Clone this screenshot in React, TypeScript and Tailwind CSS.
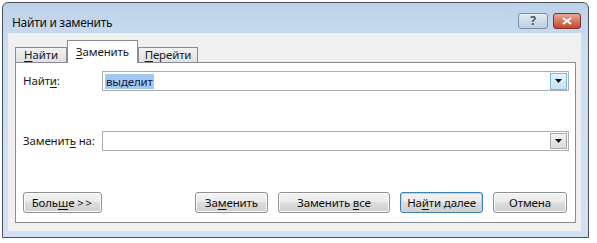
import React from 'react';

function U({ children }: { children: React.ReactNode }) {
  return <span className="underline underline-offset-2 decoration-1">{children}</span>;
}

function Arrow() {
  return (
    <svg width="7" height="4" viewBox="0 0 7 4">
      <path d="M0 0h7L3.5 4z" fill="#111" />
    </svg>
  );
}

function Combo({ focused, children }: { focused?: boolean; children?: React.ReactNode }) {
  return (
    <div className="flex-1 h-[20px] border border-[#abadb3] bg-white flex items-center pl-[2px] pr-px">
      <div className="flex-1 flex items-center">{children}</div>
      <div
        className={
          focused
            ? 'w-[17px] h-[17px] border border-[#7eb4dd] bg-gradient-to-b from-[#e6f3fc] to-[#c5e2f6] flex items-center justify-center'
            : 'w-[17px] h-[16px] border border-[#a9a9a9] bg-gradient-to-b from-[#f4f4f4] to-[#d9d9d9] flex items-center justify-center'
        }
      >
        <Arrow />
      </div>
    </div>
  );
}

function Btn({ w, focused, children }: { w: string; focused?: boolean; children: React.ReactNode }) {
  return (
    <div
      className={
        (focused
          ? 'border-[#3c7fb1] shadow-[inset_0_0_0_1px_#aedcf6] '
          : 'border-[#8e8f8f] shadow-[inset_0_0_0_1px_#fcfcfc] ') +
        w +
        ' h-[21px] rounded-[3px] border bg-[linear-gradient(#f3f3f3_0%,#ebebeb_45%,#dddddd_50%,#cfcfcf_100%)] flex items-center justify-center text-[#111]'
      }
    >
      {children}
    </div>
  );
}

export default function App() {
  return (
    <div className="w-[597px] h-[243px] bg-white pt-[2px] pl-[2px] font-['Noto_Sans',sans-serif] text-[11.5px] tracking-[-0.15px] leading-[16px] text-[#1a1a1a]">
      <div className="w-[587px] h-[236px] border border-[#4b4f55] rounded-t-[6px] bg-[linear-gradient(#bcd2ea,#cddef0_20%,#d2e2f2)] flex flex-col pl-[5px] pr-[7px] pb-[6px]">
        {/* Title bar */}
        <div className="h-[30px] flex items-start shrink-0">
          <div className="mt-[12px] ml-[4px] text-[#111] text-[12px] tracking-[-0.3px]">Найти и заменить</div>
          <div className="ml-auto mt-[10px] flex gap-[5px]">
            <div className="w-[30px] h-[16px] rounded-[3px] border border-[#7d8ea2] bg-[linear-gradient(#e6edf5,#cfdcea_50%,#bccde0)] flex items-center justify-center text-[#4a5566] text-[12px] leading-none font-bold">
              ?
            </div>
            <div className="w-[28px] h-[16px] rounded-[3px] border border-[#7b3326] bg-[linear-gradient(#e8a898,#d8775f_50%,#c2462f)] flex items-center justify-center">
              <svg width="10" height="8" viewBox="0 0 10 8">
                <path d="M1 1l8 6M9 1L1 7" stroke="#fff" strokeWidth="2" />
              </svg>
            </div>
          </div>
        </div>

        {/* Client area */}
        <div className="flex-1 bg-[#f0f0f0] flex flex-col pl-[7px] pr-[5px] pt-[7px] pb-[8px]">
          <div className="flex items-end h-[22px] shrink-0 relative z-10">
            <div className="w-[52px] h-[15px] border border-b-0 border-[#898c95] bg-[linear-gradient(#f2f2f2,#e1e1e1)] flex items-center justify-center">
              <span>
                <U>Н</U>айти
              </span>
            </div>
            <div className="w-[71px] h-[23px] -mb-px border border-b-0 border-[#898c95] bg-white flex items-start justify-center pt-[3px]">
              <span>
                <U>З</U>аменить
              </span>
            </div>
            <div className="w-[60px] h-[15px] border border-b-0 border-[#898c95] bg-[linear-gradient(#f2f2f2,#e1e1e1)] flex items-center justify-center">
              <span>
                <U>П</U>ерейти
              </span>
            </div>
          </div>

          <div className="flex-1 border border-[#898c95] bg-white flex flex-col pl-[7px] pr-[6px] pt-[8px]">
            <div className="flex items-center h-[20px]">
              <div className="w-[79px]">
                Найт<U>и</U>:
              </div>
              <Combo focused>
                <span className="bg-[#a3c7ef] text-[#101a40] px-px leading-[15px]">выделит</span>
              </Combo>
            </div>

            <div className="flex items-center h-[20px] mt-[40px]">
              <div className="w-[79px]">
                Заменит<U>ь</U> на:
              </div>
              <Combo />
            </div>

            <div className="flex items-center mt-[41px] pr-[2px]">
              <Btn w="w-[79px]">
                <span>
                  Боль<U>ш</U>е <span className="tracking-[1.5px]">&gt;&gt;</span>
                </span>
              </Btn>
              <div className="ml-auto flex gap-[10px]">
                <Btn w="w-[73px]">
                  <span>
                    За<U>м</U>енить
                  </span>
                </Btn>
                <Btn w="w-[112px]">
                  <span>
                    Заменить <U>в</U>се
                  </span>
                </Btn>
                <Btn w="w-[83px]" focused>
                  <span>
                    На<U>й</U>ти далее
                  </span>
                </Btn>
                <Btn w="w-[74px]">
                  <span>Отмена</span>
                </Btn>
              </div>
            </div>
          </div>
        </div>
      </div>
    </div>
  );
}
